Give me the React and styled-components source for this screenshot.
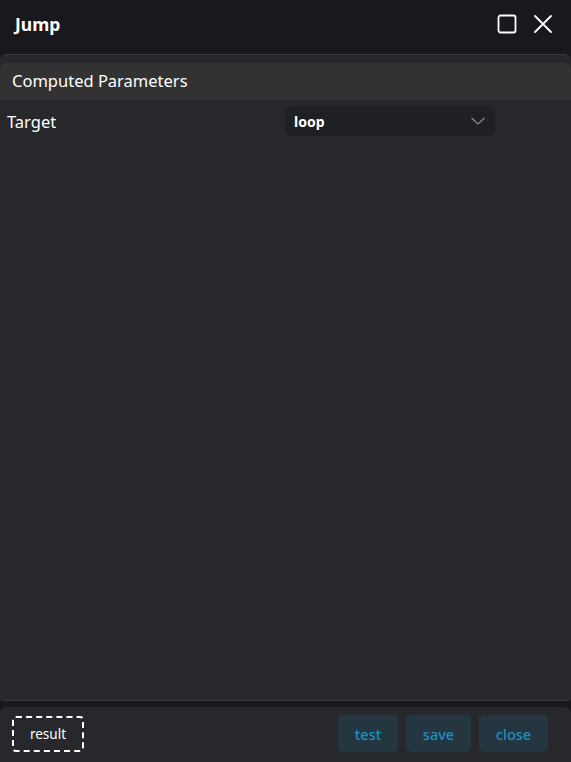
import React from "react";
import styled, { createGlobalStyle } from "styled-components";

const Global = createGlobalStyle`
  html, body {
    margin: 0;
    padding: 0;
    background: #19191d;
    font-family: "Noto Sans", "Open Sans", sans-serif;
  }
  * { box-sizing: border-box; }
`;

const Window = styled.div`
  width: 571px;
  height: 762px;
  display: flex;
  flex-direction: column;
  background: #19191d;
  overflow: hidden;
`;

const TitleBar = styled.div`
  height: 54px;
  flex-shrink: 0;
  display: flex;
  align-items: center;
  justify-content: space-between;
  padding: 0 18px 0 15px;
`;

const Title = styled.h1`
  margin: 0;
  color: #fff;
  font-size: 17.5px;
  font-weight: 700;
  padding-bottom: 6px;
`;

const TitleActions = styled.div`
  display: flex;
  align-items: center;
  gap: 16px;
  padding-bottom: 6px;
`;

const Body = styled.div`
  flex: 1;
  background: #26282c;
  border-top: 1px solid #3a3b40;
  border-bottom: 1px solid #3a3b40;
  border-radius: 7px 7px 4px 4px;
  padding-top: 8px;
`;

const SectionHeader = styled.div`
  height: 37px;
  background: #323233;
  border-radius: 6px 6px 0 0;
  color: #fff;
  font-size: 16.5px;
  display: flex;
  align-items: center;
  padding-left: 12px;
  padding-bottom: 2px;
`;

const Row = styled.div`
  display: grid;
  grid-template-columns: 278px 210px;
  align-items: center;
  padding: 6px 0 0 7px;
`;

const Label = styled.span`
  color: #fff;
  font-size: 16.5px;
`;

const Select = styled.div`
  height: 30px;
  background: #1f2024;
  border-radius: 6px;
  display: flex;
  align-items: center;
  justify-content: space-between;
  padding: 0 9px 0 9px;
  color: #fff;
  font-size: 14px;
  font-weight: 700;
`;

const Footer = styled.div`
  height: 55px;
  flex-shrink: 0;
  margin-top: 6px;
  background: #26282c;
  border-radius: 7px 7px 0 0;
  display: flex;
  align-items: center;
  justify-content: space-between;
  padding: 0 23px 2px 12px;
`;

const ResultButton = styled.button`
  height: 36px;
  width: 72px;
  background: transparent;
  border: 2px dashed #fff;
  border-radius: 4px;
  color: #fff;
  font-family: inherit;
  font-size: 13.5px;
  padding: 0;
`;

const Actions = styled.div`
  display: flex;
  gap: 8px;
`;

const ActionButton = styled.button`
  height: 37px;
  width: ${p => p.w}px;
  background: #243640;
  border: none;
  border-radius: 5px;
  color: #1b90c2;
  font-family: inherit;
  font-size: 14.5px;
  font-weight: 500;
  padding: 0;
`;

const Square = () => (
  <svg width="20" height="20" viewBox="0 0 20 20">
    <rect x="1.5" y="1.5" width="17" height="17" rx="2" fill="none" stroke="#fff" strokeWidth="1.8" />
  </svg>
);

const Cross = () => (
  <svg width="20" height="20" viewBox="0 0 20 20">
    <path d="M2 2 L18 18 M18 2 L2 18" stroke="#fff" strokeWidth="1.8" strokeLinecap="round" />
  </svg>
);

const Chevron = () => (
  <svg width="16" height="10" viewBox="0 0 16 10">
    <path d="M1.5 2 L8 8 L14.5 2" fill="none" stroke="#8b8d92" strokeWidth="1.2" />
  </svg>
);

export default function App() {
  return (
    <Window>
      <Global />
      <TitleBar>
        <Title>Jump</Title>
        <TitleActions>
          <Square />
          <Cross />
        </TitleActions>
      </TitleBar>
      <Body>
        <SectionHeader>Computed Parameters</SectionHeader>
        <Row>
          <Label>Target</Label>
          <Select>
            <span>loop</span>
            <Chevron />
          </Select>
        </Row>
      </Body>
      <Footer>
        <ResultButton>result</ResultButton>
        <Actions>
          <ActionButton w={60}>test</ActionButton>
          <ActionButton w={65}>save</ActionButton>
          <ActionButton w={69}>close</ActionButton>
        </Actions>
      </Footer>
    </Window>
  );
}
